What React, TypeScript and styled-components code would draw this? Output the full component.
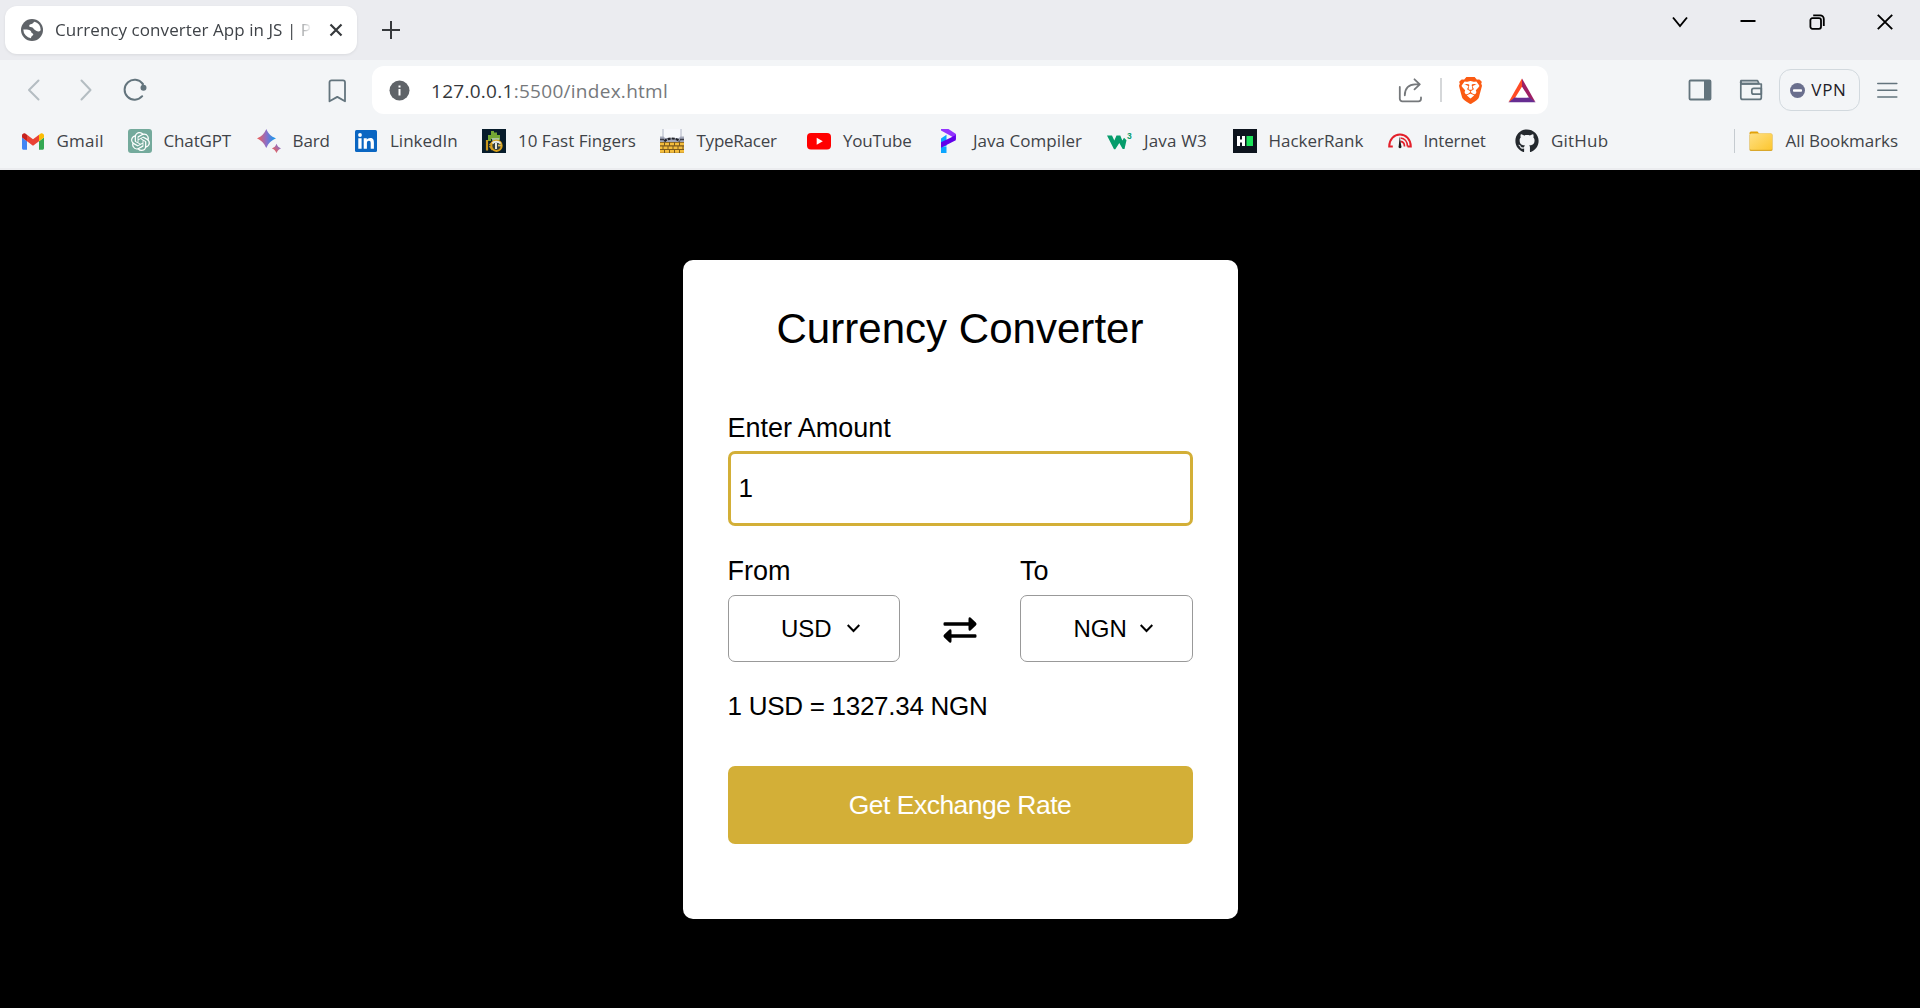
import React from "react";
import styled, { createGlobalStyle } from "styled-components";
import { FaGithub } from "react-icons/fa";
import { SiOpenai, SiBrave } from "react-icons/si";

const Global = createGlobalStyle`
  * { box-sizing: border-box; }
  html, body { height: 100%; }
  body { margin: 0; overflow: hidden; background: #000; }
  svg { display: block; flex: none; }
  button, input { font: inherit; color: inherit; }
`;

const Window = styled.div`
  display: flex;
  flex-direction: column;
  height: 1008px;
  background: #000;
  font-family: "Open Sans", sans-serif;
  font-size: 17px;
  line-height: 24px;
  color: #3f4348;
`;

const PlainButton = styled.button`
  display: flex;
  align-items: center;
  justify-content: center;
  flex: none;
  border: 0;
  padding: 0;
  background: none;
`;

/* ---------- tab strip ---------- */

const TabStrip = styled.header`
  display: flex;
  height: 60px;
  padding: 6px 0 6px 5px;
  background: #ebecf0;
`;

const Tab = styled.div`
  display: flex;
  align-items: center;
  width: 352px;
  padding: 0 15px 0 16px;
  background: #fff;
  border-radius: 12px;
  box-shadow: 0 1px 3px rgba(0, 0, 0, 0.08);
`;

const TabTitle = styled.span`
  flex: none;
  width: 262px;
  margin-left: 12px;
  margin-right: 12px;
  white-space: nowrap;
  letter-spacing: 0.06px;
  mask-image: linear-gradient(to right, #000 236px, transparent 257px);
`;

const NewTab = styled(PlainButton)`
  width: 18px;
  margin-left: 25px;
`;

const WindowControls = styled.div`
  display: flex;
  gap: 52.5px;
  margin-left: auto;
  padding: 8px 27px 0 0;
`;

const WindowButton = styled(PlainButton)`
  width: 16px;
  height: 16px;
  color: #000;
`;

/* ---------- toolbar ---------- */

const Toolbar = styled.nav`
  display: flex;
  align-items: center;
  height: 60px;
  padding: 0 22px 0 21px;
  background: #f3f5f7;
`;

const NavButtons = styled.div`
  display: flex;
  gap: 27px;
  width: 306px;
`;

const BookmarkSlot = styled.div`
  width: 45px;
`;

const AddressBar = styled.div`
  display: flex;
  align-items: center;
  width: 1176px;
  height: 48px;
  padding: 0 12.500px 0 16.500px;
  background: #fff;
  border-radius: 12px;
`;

const Url = styled.span`
  flex: 1;
  margin-left: 21.500px;
  padding-top: 1px;
  font-size: 19px;
  line-height: 26px;
  letter-spacing: 0.28px;
  color: #76797c;
`;

const Host = styled.span`
  color: #35383c;
`;

const Divider = styled.i<{ $tone: string }>`
  width: 1.5px;
  height: 24px;
  background: ${(p) => p.$tone};
`;

const AddressActions = styled.div`
  display: flex;
  align-items: center;
  gap: 17px;
`;

const ShieldButton = styled(PlainButton)`
  width: 24px;
  color: #fb5a12;
`;

const RewardsButton = styled(PlainButton)`
  width: 28px;
  margin-left: 8px;
`;

const ToolbarActions = styled.div`
  display: flex;
  align-items: center;
  margin-left: auto;
`;

const Wallet = styled(PlainButton)`
  margin: 0 16px 0 27px;
`;

const VpnButton = styled(PlainButton)`
  gap: 6px;
  width: 81px;
  height: 42px;
  margin-right: 17px;
  padding-right: 2px;
  border: 1.5px solid #d2d9de;
  border-radius: 12px;
  color: #1d2026;
  letter-spacing: 0.7px;
`;

/* ---------- bookmarks ---------- */

const BookmarksBar = styled.nav`
  display: flex;
  height: 50px;
  padding: 0 22px 8px 21px;
  background: #f3f5f7;
  box-shadow: inset 0 -2px #ebecef;
`;

const Bookmark = styled.a<{ $width?: number; $spacing?: number; $gap?: number }>`
  display: flex;
  align-items: center;
  flex: none;
  width: ${(p) => (p.$width ? `${p.$width}px` : "auto")};
  gap: ${(p) => p.$gap ?? 12}px;
  letter-spacing: ${(p) => p.$spacing ?? 0}px;
  white-space: nowrap;
`;

const Favicon = styled.span<{ $bg?: string; $radius?: number }>`
  display: flex;
  align-items: center;
  justify-content: center;
  flex: none;
  width: 24px;
  height: 24px;
  color: #fff;
  background: ${(p) => p.$bg ?? "transparent"};
  border-radius: ${(p) => p.$radius ?? 0}px;
`;

const AllBookmarks = styled.div`
  display: flex;
  align-items: center;
  gap: 14px;
  margin-left: auto;
`;

/* ---------- converter page ---------- */

const Page = styled.main`
  display: flex;
  justify-content: center;
  flex: 1;
  padding-top: 90px;
  font-family: "Liberation Sans", Arial, sans-serif;
  font-size: 27px;
  line-height: 31px;
  color: #000;
`;

const Card = styled.section`
  display: flex;
  flex-direction: column;
  width: 555px;
  height: 659px;
  padding: 45px 45px 44px;
  background: #fff;
  border-radius: 10px;
`;

const Title = styled.h1`
  margin: 0 0 60px;
  font-size: 42px;
  font-weight: 400;
  line-height: 48px;
  letter-spacing: 0.03px;
  text-align: center;
`;

const Label = styled.label`
  letter-spacing: -0.04px;
`;

const AmountInput = styled.input`
  width: 100%;
  height: 75px;
  margin: 7px 0 30px;
  padding: 0 8px;
  border: 3px solid #d3af37;
  border-radius: 7px;
  outline: 0;
  background: #fff;
  font-size: 26px;
`;

const Currencies = styled.div`
  display: flex;
  justify-content: space-between;
  align-items: flex-end;
`;

const CurrencyField = styled.div`
  display: flex;
  flex-direction: column;
  gap: 8px;
  width: 172.500px;
`;

const Select = styled(PlainButton)<{ $gap: number }>`
  justify-content: flex-start;
  gap: ${(p) => p.$gap}px;
  height: 67px;
  padding-left: 52.500px;
  border: 1px solid #999;
  border-radius: 7px;
  background: #fff;
  font-size: 24px;
`;

const Swap = styled(PlainButton)`
  width: 34px;
  height: 67px;
  padding-top: 3px;
`;

const Result = styled.p`
  margin: 29px 0 45px;
  font-size: 26px;
  line-height: 30px;
  letter-spacing: -0.27px;
`;

const Submit = styled(PlainButton)`
  height: 78px;
  border-radius: 7px;
  background: #d3af37;
  color: #fff;
  font-size: 26.500px;
  letter-spacing: -0.52px;
`;

/* ---------- drawings ---------- */

const line = { fill: "none", strokeLinecap: "round", strokeLinejoin: "round" } as const;
const slate = "#63747d";

const GlobeIcon = () => (
  <svg width="22" height="22" viewBox="0 0 22 22">
    <circle cx="11" cy="11" r="11" fill="#5f6368" />
    <path d="M2.3 10.6c2.6-.4 5.2-.2 6.900.9 1.600 1.100.5 2.100 2.100 2.700 1.200.5 1.300 1.600.3 2.200-.9.600-1.500 1.100-1.600 2.800A8.800 8.800 0 0 1 2.300 10.600zM13.600 2.700c-1.500.6-1.300 1.800-2.900 2.200-1.700.4-2.900 1.100-2.400 2.400.4 1.200 2.100.8 3.100 1.300 1.200.6 1.200 1.900 2.500 2.300 1.600.5 1.800 1.600 3.700 1.500 1.200 0 1.800-.6 2.100-1.300A8.800 8.800 0 0 0 13.600 2.700z" fill="#fff" />
  </svg>
);

const BackIcon = ({ flip }: { flip?: boolean }) => (
  <svg width="24" height="24" viewBox="0 0 24 24" {...line} stroke="#b4bdc2" strokeWidth="2">
    <path d={flip ? "M9.500 2.500 18.500 12l-9 9.500" : "M17.500 2.500 8 12l9.500 9.500"} />
  </svg>
);

const ReloadIcon = () => (
  <svg width="24" height="24" viewBox="0 0 24 24" {...line} stroke={slate} strokeWidth="2">
    <path d="M19.600 5.700A10 10 0 1 0 19.200 18.200" />
    <circle cx="20.500" cy="9.700" r="2" fill={slate} />
    <path d="M19.600 5.700l1 4" />
  </svg>
);

const SaveIcon = () => (
  <svg width="21" height="25" viewBox="0 0 21 25" {...line} stroke={slate} strokeWidth="1.800">
    <path d="M2.500 4.300a2 2 0 0 1 2-2H16a2 2 0 0 1 2 2V23.300l-7.700-4.400L2.500 23.300z" />
  </svg>
);

const InfoIcon = () => (
  <svg width="21" height="21" viewBox="0 0 21 21">
    <circle cx="10.500" cy="10.500" r="10" fill="#5f6368" />
    <path d="M9.500 5.500h2v2h-2zM9.500 9h2v6.500h-2z" fill="#fff" />
  </svg>
);

const ShareIcon = () => (
  <svg width="25" height="25" viewBox="0 0 25 25" {...line} stroke="#75787b" strokeWidth="1.800">
    <path d="M1.800 9v11.800a2.500 2.500 0 0 0 2.500 2.500h16.200a2.500 2.500 0 0 0 2.500-2.500v-1.300" />
    <path d="M6.800 17.300C6.800 10.300 11 6.300 17 6.300h4.800M16.500 1.300l5.300 5-5.300 5" />
  </svg>
);

const RewardsIcon = () => (
  <svg width="28" height="25" viewBox="0 0 28 25">
    <path d="M14 .5v8.200L6.600 20.500.5 24.300z" fill="#ff4b25" />
    <path d="M14 .5 27.500 24.300l-6-3.800L14 8.700z" fill="#9e1f63" />
    <path d="M.5 24.300l6.100-4.800h14.900l6 4.800z" fill="#662d91" />
    <path d="M14 9.500l5.700 10H8.300z" fill="#fff" />
  </svg>
);

const SidebarIcon = () => (
  <svg width="24" height="22" viewBox="0 0 24 22">
    <rect x="1.500" y="1.500" width="21" height="19" rx="1" fill="none" stroke={slate} strokeWidth="1.800" />
    <path d="M16 1h7v20h-7z" fill={slate} />
  </svg>
);

const WalletIcon = () => (
  <svg width="24" height="22" viewBox="0 0 24 22" fill="none" stroke={slate} strokeWidth="1.700" strokeLinejoin="round">
    <path d="M2 5V1.500h16.500l1.500 3.200z" fill="#b5bec3" />
    <path d="M1.800 2.500v15.900a2 2 0 0 0 2 2h16.500a2 2 0 0 0 2-2V5H3.500a1.700 1.700 0 0 1-1.700-2.500z" />
    <path d="M22.300 9.300h-7.500a2 2 0 0 0-2 2v1.900a2 2 0 0 0 2 2h7.500z" />
  </svg>
);

const VpnIcon = () => (
  <svg width="15" height="15" viewBox="0 0 15 15">
    <circle cx="7.500" cy="7.500" r="7.500" fill="#6a6f8d" />
    <rect x="3" y="6.300" width="9" height="2.400" rx=".8" fill="#fff" />
  </svg>
);

const MenuIcon = () => (
  <svg width="21" height="16" viewBox="0 0 21 16" stroke={slate} strokeWidth="1.600" strokeLinecap="round">
    <path d="M.8 1.500h19M.8 8.300h19M.8 15h19" />
  </svg>
);

const GmailIcon = () => (
  <svg width="22" height="17" viewBox="52 42 88 66">
    <path fill="#4285f4" d="M58 108h14V74L52 59v43c0 3.320 2.690 6 6 6" />
    <path fill="#34a853" d="M120 108h14c3.320 0 6-2.690 6-6V59l-20 15" />
    <path fill="#fbbc04" d="M120 48v26l20-15v-8c0-7.420-8.470-11.650-14.400-7.200" />
    <path fill="#ea4335" d="M72 74V48l24 18 24-18v26L96 92" />
    <path fill="#c5221f" d="M52 51v8l20 15V48l-5.600-4.200c-5.940-4.450-14.400-.22-14.400 7.200" />
  </svg>
);

const BardIcon = () => (
  <svg width="24" height="24" viewBox="0 0 24 24">
    <defs>
      <linearGradient id="bardLarge">
        <stop offset=".1" stopColor="#e36166" />
        <stop offset=".5" stopColor="#8a6fc9" />
        <stop offset=".9" stopColor="#1f95ea" />
      </linearGradient>
      <linearGradient id="bardSmall" x1="0" y1="1" x2="1" y2="0">
        <stop offset=".15" stopColor="#ee6256" />
        <stop offset=".8" stopColor="#8b6fc8" />
      </linearGradient>
    </defs>
    <path fill="url(#bardLarge)" d="M9.300 0c2.200 5 4.500 7.200 9.700 9.400-5.200 2.200-7.500 4.500-9.700 9.700C7.100 13.900 4.800 11.600 0 9.400 4.800 7.200 7.100 5 9.300 0z" />
    <path fill="url(#bardSmall)" d="M19.500 14.700c1.100 2.600 2 3.600 4.500 4.700-2.500 1.100-3.400 2.100-4.500 4.600-1.100-2.500-2-3.500-4.600-4.600 2.600-1.100 3.500-2.100 4.600-4.700z" />
  </svg>
);

const LinkedInIcon = () => (
  <svg width="22" height="22" viewBox="0 0 22 22">
    <rect width="22" height="22" rx="1.500" fill="#0a66c2" />
    <circle cx="5" cy="5" r="1.900" fill="#fff" />
    <path fill="#fff" d="M3.300 8.300h3.300v10.400H3.300zM8.700 8.300h3.100v1.500c.6-1 1.700-1.800 3.400-1.800 3 0 3.700 2 3.700 4.800v5.900h-3.200v-5.200c0-1.500-.1-2.800-1.800-2.800s-2 1.300-2 2.700v5.300H8.700z" />
  </svg>
);

const FingersIcon = () => (
  <svg width="24" height="24" viewBox="0 0 24 24" fill="none">
    <path d="M7.500 6v6M10.500 2v8M13.500 3.500v7M16.500 6v5" stroke="#74a833" strokeWidth="3" />
    <path d="M9.500 9h8l-1 3h-6z" fill="#a8c4a0" />
    <path d="M5 11v10.500" stroke="#c9971d" strokeWidth="2.200" />
    <path d="M7.500 16l3-3M7.500 17l3 4" stroke="#c9971d" strokeWidth="1.600" />
    <circle cx="14.500" cy="16.700" r="5.200" fill="#33403f" stroke="#d6a01b" strokeWidth="2" />
    <path d="M10.500 14.500c1-2 6-2.500 8 0M14 14v6" stroke="#e5eae8" strokeWidth="2" />
    <path d="M16 16.500h3.500" stroke="#e2bd55" strokeWidth="1.800" />
  </svg>
);

const TypeRacerIcon = () => (
  <svg width="24" height="24" viewBox="0 0 24 24">
    <path d="M3 0h18v10H3z" fill="#f7f8fc" />
    <path d="M3 0v9M21 0v9" stroke="#aeb4c4" strokeWidth="1" />
    <path d="M0 7.500h3.500L5 9h14l1.500-1.500H24v6H0z" fill="#a3a7b8" />
    <path d="M4.500 12.500c2-4 13-4 15 0" fill="none" stroke="#22232a" strokeWidth="2.200" strokeDasharray="3 1" />
    <path d="M0 13h24v11H0z" fill="#7a5a1e" />
    <path d="M0 15h24M-1.500 18.700h27M0 22.400h24" stroke="#f5bd3c" strokeWidth="2.600" strokeDasharray="4 1" />
    <path d="M0 10.500h4M20 10.500h4" stroke="#3b3c48" strokeWidth="1.500" />
  </svg>
);

const YouTubeIcon = () => (
  <svg width="24" height="17" viewBox="0 0 24 17">
    <rect width="24" height="16.500" rx="4" fill="#f00" />
    <path d="M9.700 4.800 15.800 8.300l-6.100 3.500z" fill="#fff" />
  </svg>
);

const ProgramizIcon = () => (
  <svg width="24" height="24" viewBox="0 0 24 24">
    <path d="M5 9.500l5.500-3.800V17L5 18z" fill="#0aa5ff" />
    <path d="M5 17.500h5.500V24H5z" fill="#0aa5ff" />
    <path d="M5 0h7.500L20 5v5.500L15 7 5 1.500z" fill="#9333ff" />
    <path d="M19.800 6v5.200L5 18.700v-5.500l9.500-4.500z" fill="#6200ea" />
  </svg>
);

const SchoolsMark = styled.span`
  display: flex;
  align-items: flex-start;
  width: 24px;
  height: 17px;
  font: 700 8.500px/7px "Liberation Sans", Arial, sans-serif;
  color: #059c6b;
`;

const SchoolsIcon = () => (
  <SchoolsMark>
    <svg width="20" height="17" viewBox="0 0 20 17">
      <path d="M0 2.500h5l2.300 5 2.200-5h3.800l2 5 1.700-2.700 2.500 2.400-2 8.800h-1.800L12.300 10l-4 6.200H7L0 2.500z" fill="#059c6b" />
    </svg>
    3
  </SchoolsMark>
);

const HackerRankIcon = () => (
  <svg width="24" height="24" viewBox="0 0 24 24">
    <path d="M4 7h3v3.500h2V7h3v10H9v-3.500H7V17H4z" fill="#fff" />
    <path d="M13.500 7h6.500v10h-6.500z" fill="#1be35a" />
  </svg>
);

const GaugeIcon = () => (
  <svg width="24" height="16" viewBox="0 0 24 16" fill="none" stroke="#e3202b">
    <path d="M4.800 13.500H1.200C1.200 6.500 6 1.500 12 1.500s10.800 5 10.800 12h-3.300" strokeWidth="2" />
    <path d="M12.500 5c4 .3 7 3.500 7 8.500M12.500 8.300c2.500.3 4 2.200 4 5.200" strokeWidth="1.700" />
    <path d="M11.700 3.500l1.600 9.500a1.500 1.500 0 1 1-2.600 0z" fill="#1c1c1c" stroke="none" />
  </svg>
);

const FolderIcon = () => (
  <svg width="24" height="20" viewBox="0 0 24 20">
    <defs>
      <linearGradient id="folder" x1="0" y1="0" x2="1" y2="1">
        <stop stopColor="#ffe083" />
        <stop offset="1" stopColor="#fcc62f" />
      </linearGradient>
    </defs>
    <path d="M.5 2A1.500 1.500 0 0 1 2 .5h6.500L10.500 3H.5z" fill="#e3a208" />
    <rect x=".5" y="2.500" width="23" height="17.500" rx="1.500" fill="#d9a72b" />
    <rect x=".9" y="2.500" width="22.200" height="16.300" rx="1.500" fill="url(#folder)" />
  </svg>
);

const CaretIcon = () => (
  <svg width="13" height="9" viewBox="0 0 13 9" fill="none" stroke="#000" strokeWidth="2">
    <path d="M.7 1 6.500 7 12.300 1" />
  </svg>
);

const SwapIcon = () => (
  <svg width="34" height="26" viewBox="0 0 34 26" fill="#000">
    <path d="M1.800 5.200h23.700V2q0-2.500 2-1.400l5.300 5q1.400 1.400 0 2.800l-5.300 5q-2 1.100-2-1.400V8.700H1.800Q.5 8.700.5 7.500V6.400Q.5 5.200 1.800 5.200z" />
    <path d="M32.200 17.300H8.500V14q0-2.500-2-1.400l-5.300 5q-1.400 1.400 0 2.800l5.300 5q2 1.100 2-1.400v-3.200h23.700q1.300 0 1.300-1.200v-1.100q0-1.200-1.300-1.200z" />
  </svg>
);

type BookmarkItem = {
  name: string;
  width: number;
  spacing: number;
  gap?: number;
  bg?: string;
  radius?: number;
  icon: React.ReactNode;
};

const bookmarks: BookmarkItem[] = [
  { name: "Gmail", width: 107, spacing: 0.25, gap: 11.5, icon: <GmailIcon /> },
  { name: "ChatGPT", width: 129, spacing: -0.15, gap: 11.5, bg: "#74aa9c", radius: 3, icon: <SiOpenai size={19} /> },
  { name: "Bard", width: 97, spacing: -0.1, gap: 11.5, icon: <BardIcon /> },
  { name: "LinkedIn", width: 128, spacing: 0, gap: 12, icon: <LinkedInIcon /> },
  { name: "10 Fast Fingers", width: 178, spacing: 0, gap: 12, bg: "#071c2b", icon: <FingersIcon /> },
  { name: "TypeRacer", width: 147, spacing: -0.25, gap: 12.5, icon: <TypeRacerIcon /> },
  { name: "YouTube", width: 129, spacing: -0.2, icon: <YouTubeIcon /> },
  { name: "Java Compiler", width: 171, spacing: 0.04, gap: 13, icon: <ProgramizIcon /> },
  { name: "Java W3", width: 126, spacing: 0.16, gap: 13, icon: <SchoolsIcon /> },
  { name: "HackerRank", width: 155, spacing: 0, gap: 11.5, bg: "#0d141e", icon: <HackerRankIcon /> },
  { name: "Internet", width: 127, spacing: -0.2, gap: 11.5, icon: <GaugeIcon /> },
  { name: "GitHub", width: 100, spacing: 0.2, gap: 12, icon: <FaGithub size={24} color="#24292e" /> },
];

export default function App() {
  return (
    <Window>
      <Global />
      <TabStrip>
        <Tab>
          <GlobeIcon />
          <TabTitle>Currency converter App in JS | Pr</TabTitle>
          <svg width="14" height="14" viewBox="0 0 14 14" stroke="#36393c" strokeWidth="2.200">
            <path d="M1.500 1.500l11 11M12.500 1.500l-11 11" />
          </svg>
        </Tab>
        <NewTab>
          <svg width="18" height="18" viewBox="0 0 18 18" stroke="#36393c" strokeWidth="2">
            <path d="M9 0v18M0 9h18" />
          </svg>
        </NewTab>
        <WindowControls>
          <WindowButton>
            <svg width="16" height="16" viewBox="0 0 16 16" fill="none" stroke="#000" strokeWidth="1.900">
              <path d="M1 3.500l7 8.500 7-8.500" />
            </svg>
          </WindowButton>
          <WindowButton>
            <svg width="16" height="16" viewBox="0 0 16 16" stroke="#000" strokeWidth="2">
              <path d="M.5 7h15" />
            </svg>
          </WindowButton>
          <WindowButton>
            <svg width="16" height="16" viewBox="0 0 16 16" fill="none" stroke="#000" strokeWidth="1.800">
              <rect x="1.400" y="4.200" width="10.600" height="10.600" rx="2" />
              <path d="M4.200 1.400h7a3.600 3.600 0 0 1 3.600 3.600v7" />
            </svg>
          </WindowButton>
          <WindowButton>
            <svg width="16" height="16" viewBox="0 0 16 16" stroke="#000" strokeWidth="1.900">
              <path d="M.8.8l14.400 14.400M15.200.8.8 15.200" />
            </svg>
          </WindowButton>
        </WindowControls>
      </TabStrip>

      <Toolbar>
        <NavButtons>
          <PlainButton><BackIcon /></PlainButton>
          <PlainButton><BackIcon flip /></PlainButton>
          <PlainButton><ReloadIcon /></PlainButton>
        </NavButtons>
        <BookmarkSlot>
          <PlainButton><SaveIcon /></PlainButton>
        </BookmarkSlot>
        <AddressBar>
          <InfoIcon />
          <Url><Host>127.0.0.1</Host>:5500/index.html</Url>
          <AddressActions>
            <ShareIcon />
            <Divider $tone="#d5d7d9" />
            <ShieldButton><SiBrave size={27} /></ShieldButton>
            <RewardsButton><RewardsIcon /></RewardsButton>
          </AddressActions>
        </AddressBar>
        <ToolbarActions>
          <PlainButton><SidebarIcon /></PlainButton>
          <Wallet><WalletIcon /></Wallet>
          <VpnButton><VpnIcon />VPN</VpnButton>
          <PlainButton><MenuIcon /></PlainButton>
        </ToolbarActions>
      </Toolbar>

      <BookmarksBar>
        {bookmarks.map((b) => (
          <Bookmark key={b.name} $width={b.width} $spacing={b.spacing} $gap={b.gap}>
            <Favicon $bg={b.bg} $radius={b.radius}>{b.icon}</Favicon>
            {b.name}
          </Bookmark>
        ))}
        <AllBookmarks>
          <Divider $tone="#c5cbd0" />
          <Bookmark $spacing={-0.06}>
            <Favicon><FolderIcon /></Favicon>
            All Bookmarks
          </Bookmark>
        </AllBookmarks>
      </BookmarksBar>

      <Page>
        <Card>
          <Title>Currency Converter</Title>
          <Label>Enter Amount</Label>
          <AmountInput defaultValue="1" />
          <Currencies>
            <CurrencyField>
              <Label>From</Label>
              <Select $gap={15.5}>USD<CaretIcon /></Select>
            </CurrencyField>
            <Swap><SwapIcon /></Swap>
            <CurrencyField>
              <Label>To</Label>
              <Select $gap={13}>NGN<CaretIcon /></Select>
            </CurrencyField>
          </Currencies>
          <Result>1 USD = 1327.34 NGN</Result>
          <Submit>Get Exchange Rate</Submit>
        </Card>
      </Page>
    </Window>
  );
}
